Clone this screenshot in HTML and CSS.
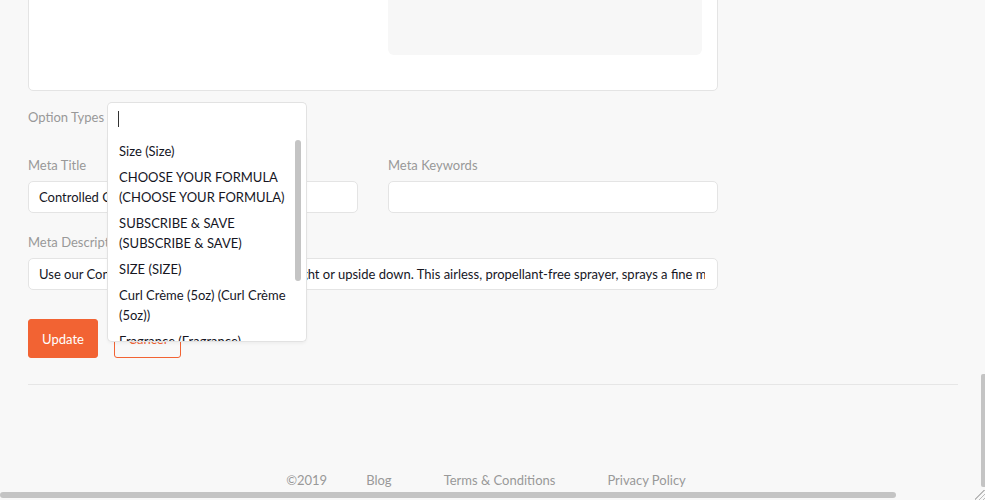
FILE: index.html
```html
<!DOCTYPE html>
<html>
<head>
<meta charset="utf-8">
<link rel="stylesheet" href="styles.css">
</head>
<body>
<div class="page">
  <div class="form">
    <div class="card">
      <div class="card-col"></div>
      <div class="card-col preview"></div>
    </div>

    <div class="option-row">
      <label class="label inline">Option Types</label>
      <div class="select">
        <div class="select-search"><span class="caret"></span></div>
        <div class="select-results">
          <ul class="results-list">
            <li>Size (Size)</li>
            <li>CHOOSE YOUR FORMULA (CHOOSE YOUR FORMULA)</li>
            <li>SUBSCRIBE &amp; SAVE (SUBSCRIBE &amp; SAVE)</li>
            <li>SIZE (SIZE)</li>
            <li>Curl Crème (5oz) (Curl Crème (5oz))</li>
            <li>Fragrance (Fragrance)</li>
            <li>Color (Color)</li>
          </ul>
          <div class="results-thumb"></div>
        </div>
      </div>
    </div>

    <div class="grid2">
      <div class="group">
        <label class="label">Meta Title</label>
        <div class="input"><span class="input-text">Controlled Chaos Curl Spray</span></div>
      </div>
      <div class="group">
        <label class="label">Meta Keywords</label>
        <div class="input"><span class="input-text"></span></div>
      </div>
    </div>

    <div class="group desc">
      <label class="label">Meta Description</label>
      <div class="input"><span class="input-text">Use our Controlled Chaos Curl Spray hold upright or upside down. This airless, propellant-free sprayer, sprays a fine mist evenly through your hair.</span></div>
    </div>

    <div class="actions">
      <button class="btn btn-primary">Update</button>
      <button class="btn btn-outline">Cancel</button>
    </div>
  </div>

  <hr class="divider">

  <footer class="footer">
    <span class="copy">©2019</span>
    <a class="flink">Blog</a>
    <a class="flink">Terms &amp; Conditions</a>
    <a class="flink">Privacy Policy</a>
  </footer>
</div>

<div class="vscroll"></div>
<div class="hscroll"></div>
<div class="resizer"></div>
</body>
</html>
```

FILE: styles.css
```css
* { box-sizing: border-box; }

html, body {
  margin: 0;
  padding: 0;
  height: 100%;
  overflow: hidden;
}

body {
  background: #f8f8f8;
  font-family: Lato, "Open Sans", sans-serif;
  font-size: 13px;
  color: #222;
}

.page {
  padding: 0 27px 0 28px;
  width: 985px;
}

.form {
  width: 690px;
}

.card {
  margin-top: -20px;
  background: #fff;
  border: 1px solid #e4e4e4;
  border-radius: 5px;
  display: grid;
  grid-template-columns: 1fr 1fr;
  gap: 30px;
  padding: 0 15px 35px 15px;
}

.card-col {
  height: 74px;
}

.preview {
  background: #f7f7f7;
  border-radius: 0 0 6px 6px;
}

.option-row {
  margin-top: 11px;
  display: flex;
  align-items: flex-start;
  height: 34px;
  position: relative;
}

.label {
  display: block;
  color: #999;
  line-height: 20px;
  margin-bottom: 6px;
}

.label.inline {
  margin: 5px 3px 0 0;
}

.select {
  position: relative;
  width: 200px;
  height: 34px;
}

.select-search {
  height: 34px;
  background: #fff;
  border: 1px solid #e2e2e2;
  border-bottom: none;
  border-radius: 5px 5px 0 0;
  padding: 8px 10px;
}

.caret {
  display: block;
  width: 1px;
  height: 16px;
  background: #333;
}

.select-results {
  position: absolute;
  left: 0;
  top: 34px;
  width: 200px;
  height: 206px;
  background: #fff;
  border: 1px solid #e2e2e2;
  border-top: none;
  border-radius: 0 0 5px 5px;
  overflow: hidden;
  box-shadow: 0 2px 3px rgba(0,0,0,0.04);
  z-index: 10;
}

.results-list {
  list-style: none;
  margin: 0;
  padding: 2px 0 0 0;
}

.results-list li {
  padding: 3px 18px 3px 11px;
  line-height: 20px;
  color: #16161f;
}

.results-thumb {
  position: absolute;
  right: 5px;
  top: 4px;
  width: 6px;
  height: 141px;
  background: #c4c4c4;
  border-radius: 3px;
}

.grid2 {
  display: grid;
  grid-template-columns: 1fr 1fr;
  gap: 30px;
  align-items: start;
  margin-top: 19px;
}

.desc {
  margin-top: 19px;
}

.input {
  display: block;
  width: 100%;
  height: 32px;
  border: 1px solid #e4e4e4;
  border-radius: 5px;
  background: #fff;
  padding: 0 12px 0 10px;
  color: #16161f;
}

.input-text {
  display: block;
  overflow: hidden;
  white-space: nowrap;
  line-height: 30px;
}

.actions {
  margin-top: 29px;
  display: flex;
  gap: 16px;
}

.btn {
  height: 39px;
  border-radius: 3px;
  font-family: Lato, "Open Sans", sans-serif;
  font-size: 13px;
  padding: 0 13px;
}

.btn-primary {
  background: #f26333;
  border: 1px solid #f26333;
  color: #fff;
  width: 70px;
}

.btn-outline {
  background: transparent;
  border: 1px solid #f26333;
  color: #f26333;
  width: 67px;
}

.divider {
  margin: 26px 0 0 0;
  border: none;
  border-top: 1px solid #e6e6e6;
  width: 930px;
}

.footer {
  display: flex;
  justify-content: center;
  padding: 85px 0 0 12px;
  color: #999;
  line-height: 20px;
}

.copy {
  margin-right: 13px;
}

.flink {
  padding: 0 26px;
  color: #999;
}

.vscroll {
  position: fixed;
  right: 0;
  top: 374px;
  width: 4px;
  height: 113px;
  background: #c4c4c4;
  border-radius: 2px 0 0 2px;
}

.hscroll {
  position: fixed;
  left: 0;
  bottom: 2px;
  width: 896px;
  height: 6px;
  background: #c4c4c4;
  border-radius: 3px;
}

.resizer {
  position: fixed;
  right: 0;
  bottom: 0;
  width: 10px;
  height: 10px;
  background: linear-gradient(135deg, transparent 0 45%, #bbb 45% 52%, transparent 52% 66%, #bbb 66% 73%, transparent 73% 86%, #bbb 86% 93%, transparent 93%);
}
```
